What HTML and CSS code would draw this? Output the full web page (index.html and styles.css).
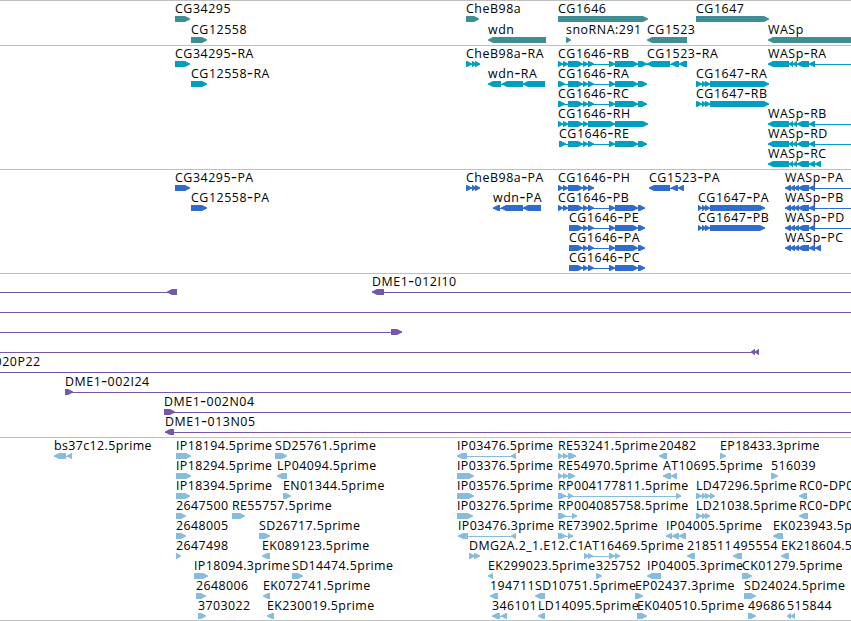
FILE: index.html
```html
<!DOCTYPE html>
<html lang="en">
  <head>
    <meta charset="UTF-8" />
    <meta name="viewport" content="width=device-width, initial-scale=1.0" />
    <title>Genome Browser</title>
    <link rel="stylesheet" href="styles.css">
  </head>
  <body>
    <main class="browser">
      <section class="track genes" id="genes"></section>
      <section class="track transcripts" id="transcripts"></section>
      <section class="track proteins" id="proteins"></section>
      <section class="track bacs" id="bacs"></section>
      <section class="track ests" id="ests"></section>
    </main>

    <script src="script.js"></script>
  </body>
</html>
```
FILE: styles.css
```css
body {
  margin: 0;
  background-color: #ffffff;
  font-family: "Open Sans", "DejaVu Sans", sans-serif;
  font-size: 12.4px;
  color: #000000;
  overflow: hidden;
}

.browser {
  display: flex;
  flex-direction: column;
  border-bottom: 1px solid #bfbfbf;
}

/* Tracks */
.track {
  box-sizing: border-box;
  border-top: 1px solid #bfbfbf;
  padding-top: 1px;
}

.genes {
  height: 45px;
  color: #3e8e93;
}

.transcripts {
  height: 124px;
  color: #009fc1;
}

.proteins {
  height: 104px;
  color: #306ccc;
}

.bacs {
  height: 164px;
  color: #7658a8;
}

.ests {
  height: 183px;
  color: #87bcdd;
}

/* One row of features */
.row {
  display: block;
  width: 100%;
  height: 20px;
  overflow: visible;
}

.genes .row {
  height: 21px;
}

.label {
  fill: #000000;
  font-kerning: none;
  letter-spacing: 0.54px;
}

.ests .label {
  letter-spacing: 0.4px;
}

.label .hyphen {
  font-size: 18px;
}

.exon {
  fill: currentColor;
}

.intron {
  fill: currentColor;
  shape-rendering: crispEdges;
}
```
FILE: script.js
```js
// Each row is a list of features: [label, label x, strand, exons, line from, line to]
const RA = "568-583 583-588 588-594 609-615 615-638 638-647";
const PB = "583-588 588-594 609-615 615-638 638-645";
const WR = "768-789 789-793 793-797 797-809 809-815";
const WP = "785-791 790-795 794-799 798-809 809-815";
const END = 860;

const tracks = {
  genes: [
    [["CG34295", 175, ">", "175-190"], ["CheB98a", 466, ">", "466-479"],
     ["CG1646", 558, ">", "558-648"], ["CG1647", 696, ">", "696-769"]],
    [["CG12558", 191, ">", "191-207"], ["wdn", 488, "<", "488-546"],
     ["snoRNA:291", 566, ">", "566-571"], ["CG1523", 647, "<", "647-687"],
     ["WASp", 768, "<", "768-860"]]
  ],
  transcripts: [
    [["CG34295-RA", 175, ">", "175-190"], ["CheB98a-RA", 466, ">", "466-472 472-476 475-480"],
     ["CG1646-RB", 558, ">", "558-563 563-568 " + RA, 558, 650],
     ["CG1523-RA", 647, "<", "647-670 671-679 679-687"],
     ["WASp-RA", 768, "<", WR, 768, END]],
    [["CG12558-RA", 191, ">", "191-207"], ["wdn-RA", 488, "<", "488-501 502-523 523-545"],
     ["CG1646-RA", 558, ">", "558-565 " + RA],
     ["CG1647-RA", 696, ">", "696-702 702-706 705-710 710-769"]],
    [["CG1646-RC", 558, ">", "558-565 " + RA],
     ["CG1647-RB", 696, ">", "696-702 702-706 705-710 710-769"]],
    [["CG1646-RH", 558, ">", "558-563 563-568 568-583 583-588 588-615 615-648"],
     ["WASp-RB", 768, "<", WR, 768, END]],
    [["CG1646-RE", 559, ">", "559-566 " + RA], ["WASp-RD", 768, "<", WR, 768, END]],
    [["WASp-RC", 768, "<", WR + " 815-821"]]
  ],
  proteins: [
    [["CG34295-PA", 175, ">", "175-190"], ["CheB98a-PA", 466, ">", "466-472 472-476 475-480"],
     ["CG1646-PH", 558, ">", "558-563 563-568 568-583 583-588 588-594"],
     ["CG1523-PA", 649, "<", "649-670 671-678 678-684"],
     ["WASp-PA", 785, "<", WP, 785, END]],
    [["CG12558-PA", 191, ">", "191-207"], ["wdn-PA", 493, "<", "493-500 501-523 523-541"],
     ["CG1646-PB", 558, ">", "558-563 563-568 568-583 " + PB],
     ["CG1647-PA", 698, ">", "698-702 702-706 705-710 710-765"],
     ["WASp-PB", 785, "<", WP, 785, END]],
    [["CG1646-PE", 569, ">", "569-583 " + PB],
     ["CG1647-PB", 698, ">", "698-702 702-706 705-710 710-765"],
     ["WASp-PD", 785, "<", WP, 785, END]],
    [["CG1646-PA", 569, ">", "569-583 " + PB], ["WASp-PC", 785, "<", WP + " 815-821"]],
    [["CG1646-PC", 569, ">", "569-583 " + PB]]
  ],
  bacs: [
    [["", 0, "<", "167-177", 0, 177], ["DME1-012I10", 372, "<", "372-384", 372, END]],
    [["", 0, ">", "", 0, END]],
    [["", 0, ">", "391-402", 0, 402]],
    [["", 0, "<", "751-755 755-759", 0, 759]],
    [["DME1-020P22", -48, ">", "", 0, END]],
    [["DME1-002I24", 65, ">", "65-73", 65, END]],
    [["DME1-002N04", 164, ">", "164-175", 164, END]],
    [["DME1-013N05", 165, "<", "165-174", 165, END]]
  ],
  ests: [
    [["bs37c12.5prime", 54, "<", "54-66 67-72"], ["IP18194.5prime", 176, ">", "176-191"],
     ["SD25761.5prime", 275, ">", "275-287"], ["IP03476.5prime", 457, "<", "457-467 511-516"],
     ["RE53241.5prime", 558, ">", "558-563 563-568 568-576"],
     ["20482", 659, "<", "659-667"], ["EP18433.3prime", 720, ">", "720-726"]],
    [["IP18294.5prime", 176, ">", "176-191"], ["LP04094.5prime", 277, "<", "277-287"],
     ["IP03376.5prime", 457, ">", "457-474"], ["RE54970.5prime", 558, ">", "558-563 563-568 568-575"],
     ["AT10695.5prime", 663, "<", "663-671 671-677"], ["516039", 771, ">", "771-778"]],
    [["IP18394.5prime", 176, ">", "176-190"], ["EN01344.5prime", 283, ">", "283-291"],
     ["IP03576.5prime", 457, ">", "457-474"],
     ["RP004177811.5prime", 558, ">", "558-566 568-573 676-681"],
     ["LD47296.5prime", 696, ">", "696-702 702-706 705-710 710-715"],
     ["RC0-DP0", 799, "<", "799-807"]],
    [["2647500", 176, ">", "176-186"], ["RE55757.5prime", 232, ">", "232-245"],
     ["IP03276.5prime", 457, ">", "457-473"], ["RP004085758.5prime", 558, ">", "558-566 572-577"],
     ["LD21038.5prime", 696, ">", "696-702 702-706 705-710"], ["RC0-DP0", 799, "<", "799-808"]],
    [["2648005", 176, ">", "176-186"], ["SD26717.5prime", 259, ">", "259-270"],
     ["IP03476.3prime", 458, "<", "458-468 511-516"], ["RE73902.5prime", 558, ">", "558-566 568-573"],
     ["IP04005.5prime", 666, "<", "666-672 672-679 679-686"],
     ["EK023943.5prime", 773, "<", "773-783"]],
    [["2647498", 176, ">", "176-181"], ["EK089123.5prime", 262, "<", "262-270"],
     ["DMG2A.2_1.E12.C1", 469, ">", "469-475 474-480"],
     ["AT16469.5prime", 584, ">", "584-589 588-593 609-615 615-620"],
     ["218511", 687, "<", "687-695"], ["495554", 733, "<", "733-742"],
     ["EK218604.5prime", 781, "<", "781-789"]],
    [["IP18094.3prime", 194, ">", "194-208"], ["SD14474.5prime", 292, ">", "292-303"],
     ["EK299023.5prime", 488, "<", "488-493"], ["325752", 596, ">", "596-602"],
     ["IP04005.3prime", 647, "<", "647-661"], ["CK01279.5prime", 742, ">", "742-752"]],
    [["2648006", 196, ">", "196-206"], ["EK072741.5prime", 263, "<", "263-270"],
     ["194711", 490, "<", "490-498"], ["SD10751.5prime", 535, "<", "535-545"],
     ["EP02437.3prime", 635, ">", "635-643"], ["SD24024.5prime", 744, ">", "744-756"]],
    [["3703022", 198, ">", "198-206"], ["EK230019.5prime", 267, "<", "267-274"],
     ["346101", 492, "<", "492-500 501-507"], ["LD14095.5prime", 538, "<", "538-545"],
     ["EK040510.5prime", 637, ">", "637-647"], ["49686", 748, ">", "748-756"],
     ["515844", 787, "<", "787-791 791-795"]]
  ]
};

function add(parent, name, attrs) {
  const el = document.createElementNS("http://www.w3.org/2000/svg", name);
  for (const key in attrs) el.setAttribute(key, attrs[key]);
  parent.appendChild(el);
  return el;
}

// Bar from s to e with a pointed end on the strand side
function drawExon(row, s, e, strand, top) {
  const tip = Math.min(5.5, e - s);
  const [back, end, dir] = strand === ">" ? [s, e, 1] : [e, s, -1];
  const neck = end - dir * tip;
  add(row, "polygon", {
    class: "exon",
    points: `${back},${top} ${neck + dir * 0.5},${top} ${end},${top + 2.5} ${end},${top + 3.5} ${neck + dir * 0.5},${top + 6} ${back},${top + 6}`
  });
}

// The hyphen is drawn wider than the font has it
function drawLabel(row, label, x) {
  const text = add(row, "text", { class: "label", x: x, y: 11 });
  const [name, suffix] = label.split("-");
  text.append(name);
  if (suffix) {
    add(text, "tspan", { class: "hyphen", dy: 1 }).textContent = "-";
    add(text, "tspan", { dy: -1 }).textContent = suffix;
  }
}

for (const id in tracks) {
  const top = 14;
  for (const features of tracks[id]) {
    const row = add(document.getElementById(id), "svg", { class: "row" });
    for (const [label, x, strand, exonText, lineFrom, lineTo] of features) {
      const exons = exonText ? exonText.split(" ").map(t => t.split("-").map(Number)) : [];
      const from = lineFrom ?? exons[0][0];
      const to = lineTo ?? exons[exons.length - 1][1];
      if (exons.length !== 1 || lineTo) {
        add(row, "rect", { class: "intron", x: from, y: top + 3, width: to - from, height: 1 });
      }
      for (const [s, e] of exons) drawExon(row, s, e, strand, top);
      if (label) drawLabel(row, label, x);
    }
  }
}
```
